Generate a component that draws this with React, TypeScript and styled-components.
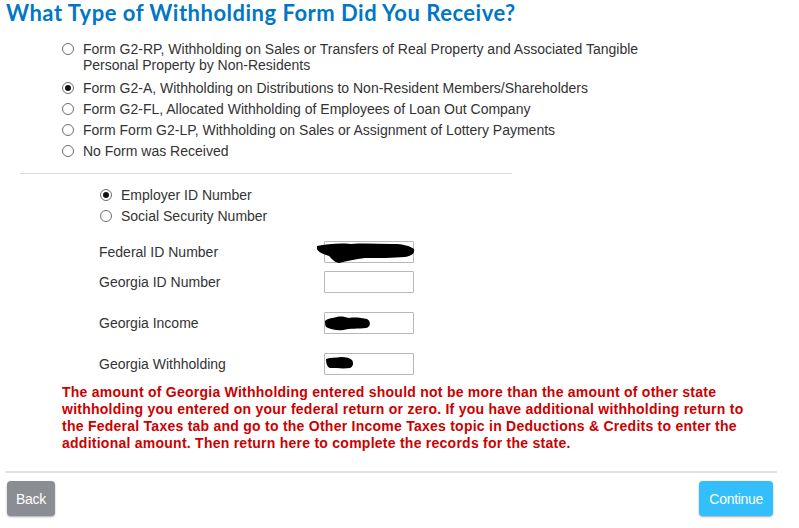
import React from 'react';
import styled, { createGlobalStyle } from 'styled-components';

const Global = createGlobalStyle`
  html, body { margin: 0; padding: 0; background: #fff; }
  body { font-family: "Liberation Sans", Arial, sans-serif; color: #333; }
`;

const Page = styled.div`
  width: 799px;
  height: 528px;
  display: flex;
  flex-direction: column;
  overflow: hidden;
`;

const Title = styled.h1`
  margin: 0;
  padding-left: 6px;
  font-family: Lato, "Open Sans", sans-serif;
  font-weight: 700;
  font-size: 22px;
  letter-spacing: 0.5px;
  line-height: 26px;
  color: #0077c5;
`;

const FormList = styled.div`
  display: flex;
  flex-direction: column;
  gap: 5px;
  margin: 15px 0 0 62px;
  width: 590px;
`;

const Option = styled.label`
  display: flex;
  align-items: flex-start;
  gap: 9px;
  font-size: 14px;
  line-height: 16px;
  color: #333;
  &:first-child { margin-bottom: 2px; }
`;

const Radio = styled.span<{ $checked?: boolean }>`
  flex: none;
  width: 12px;
  height: 12px;
  margin-top: 2px;
  box-sizing: border-box;
  border: 1px solid #6d6d6d;
  border-radius: 50%;
  background: #fff;
  display: flex;
  align-items: center;
  justify-content: center;
  &::after {
    content: "";
    display: ${p => (p.$checked ? 'block' : 'none')};
    width: 6px;
    height: 6px;
    border-radius: 50%;
    background: #111;
  }
`;

const Divider = styled.div`
  margin: 14px 0 0 20px;
  width: 492px;
  height: 1px;
  background: #dcdcdc;
`;

const IdTypeList = styled(FormList)`
  margin: 13px 0 0 100px;
  width: 300px;
`;

const IdOption = styled(Option)`
  &:first-child { margin-bottom: 0; }
`;

const Fields = styled.div`
  display: flex;
  flex-direction: column;
  margin: 17px 0 0 99px;
`;

const FieldRow = styled.div<{ $mt: number }>`
  display: grid;
  grid-template-columns: 225px 90px;
  align-items: center;
  margin-top: ${p => p.$mt}px;
  font-size: 14px;
  color: #333;
`;

const InputWrap = styled.div`
  position: relative;
  width: 90px;
  height: 22px;
`;

const TextInput = styled.input`
  box-sizing: border-box;
  width: 90px;
  height: 22px;
  border: 1px solid #b8b8b8;
  border-radius: 1px;
  padding: 0 4px;
  font: 13px "Liberation Sans", Arial, sans-serif;
  background: #fff;
  outline: none;
`;

const Redaction = styled.svg`
  position: absolute;
  pointer-events: none;
`;

const Warning = styled.p`
  margin: 9px 0 0 62px;
  width: 706px;
  font-family: "Liberation Sans", Arial, sans-serif;
  font-weight: 700;
  font-size: 14px;
  letter-spacing: 0.25px;
  line-height: 17px;
  color: #cc0000;
`;

const FooterRule = styled.div`
  margin: 19px 0 0 5px;
  width: 772px;
  height: 2px;
  background: #e1e1e1;
`;

const Footer = styled.div`
  display: flex;
  justify-content: space-between;
  margin: 8px 26px 0 7px;
`;

const Button = styled.button<{ $primary?: boolean }>`
  height: 35px;
  padding: 0 ${p => (p.$primary ? 10 : 9)}px;
  border: none;
  border-radius: 4px;
  background: ${p => (p.$primary ? '#33befc' : '#8a8d94')};
  color: #fff;
  font-family: "Liberation Sans", Arial, sans-serif;
  font-size: 14px;
  letter-spacing: -0.3px;
  box-shadow: 0 1px 2px rgba(0, 0, 0, 0.35);
  cursor: pointer;
`;

const forms = [
  'Form G2-RP, Withholding on Sales or Transfers of Real Property and Associated Tangible Personal Property by Non-Residents',
  'Form G2-A, Withholding on Distributions to Non-Resident Members/Shareholders',
  'Form G2-FL, Allocated Withholding of Employees of Loan Out Company',
  'Form Form G2-LP, Withholding on Sales or Assignment of Lottery Payments',
  'No Form was Received',
];

export default function App() {
  return (
    <Page>
      <Global />
      <Title>What Type of Withholding Form Did You Receive?</Title>
      <FormList>
        {forms.map((f, i) => (
          <Option key={f}>
            <Radio $checked={i === 1} />
            <span>{f}</span>
          </Option>
        ))}
      </FormList>
      <Divider />
      <IdTypeList>
        <IdOption>
          <Radio $checked />
          <span>Employer ID Number</span>
        </IdOption>
        <IdOption>
          <Radio />
          <span>Social Security Number</span>
        </IdOption>
      </IdTypeList>
      <Fields>
        <FieldRow $mt={0}>
          <span>Federal ID Number</span>
          <InputWrap>
            <TextInput readOnly />
            <Redaction style={{ left: -7, top: 2 }} width="98" height="20" viewBox="0 0 98 20">
              <path d="M0 3 C10 1 22 0 34 1 C48 0 62 1 76 1 C86 1 93 3 97 6 C98 10 95 13 88 14 C76 15 62 15 48 15 C38 16 30 18 22 20 C17 19 15 16 12 13 C6 11 1 9 0 6 Z" fill="#000" />
            </Redaction>
          </InputWrap>
        </FieldRow>
        <FieldRow $mt={8}>
          <span>Georgia ID Number</span>
          <InputWrap>
            <TextInput readOnly />
          </InputWrap>
        </FieldRow>
        <FieldRow $mt={19}>
          <span>Georgia Income</span>
          <InputWrap>
            <TextInput readOnly />
            <Redaction style={{ left: 1, top: 4 }} width="46" height="15" viewBox="0 0 46 15">
              <path d="M0 5 C3 2 8 2 12 1 C16 0 20 1 24 2 C30 1 37 2 42 3 C46 5 46 11 41 12 C33 13 25 12 18 14 C12 15 5 13 1 11 C0 9 0 7 0 5 Z" fill="#000" />
            </Redaction>
          </InputWrap>
        </FieldRow>
        <FieldRow $mt={19}>
          <span>Georgia Withholding</span>
          <InputWrap>
            <TextInput readOnly />
            <Redaction style={{ left: 2, top: 4 }} width="28" height="12" viewBox="0 0 28 12">
              <path d="M0 2 C5 0 10 1 15 0 C20 0 24 1 26 3 C28 6 27 10 24 11 C18 12 10 11 4 11 C1 10 0 6 0 2 Z" fill="#000" />
            </Redaction>
          </InputWrap>
        </FieldRow>
      </Fields>
      <Warning>
        The amount of Georgia Withholding entered should not be more than the amount of other state
        withholding you entered on your federal return or zero. If you have additional withholding return to
        the Federal Taxes tab and go to the Other Income Taxes topic in Deductions &amp; Credits to enter the
        additional amount. Then return here to complete the records for the state.
      </Warning>
      <FooterRule />
      <Footer>
        <Button>Back</Button>
        <Button $primary>Continue</Button>
      </Footer>
    </Page>
  );
}
